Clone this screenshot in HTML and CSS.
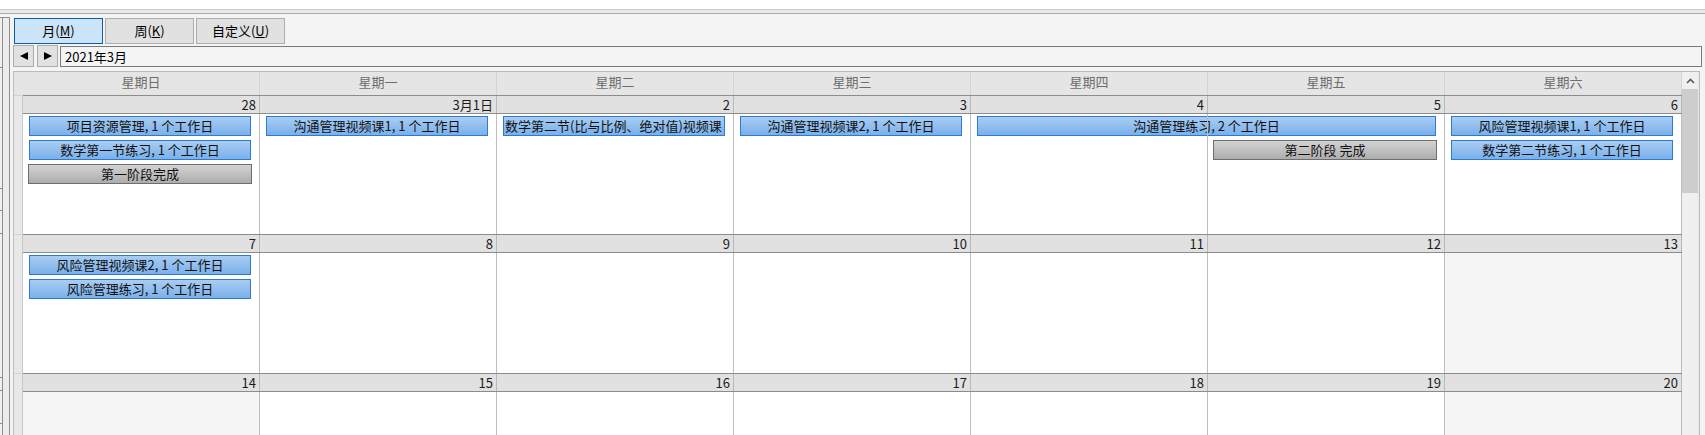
FILE: index.html
```html
<!DOCTYPE html>
<html lang="zh-CN">
<head>
<meta charset="utf-8">
<title>日历</title>
<link rel="stylesheet" href="styles.css">
</head>
<body>
<div class="topbar"></div>
<div class="rule"></div>
<div class="frame">
  <aside class="side">
    <div class="side-tabs">
      <div class="seg s1"></div>
      <div class="seg s2"></div>
      <div class="seg s3"></div>
      <div class="seg s4"></div>
      <div class="seg s5"></div>
      <div class="seg s6"></div>
      <div class="seg s7"></div>
      <div class="seg s8"></div>
    </div>
    <div class="side-panel"></div>
  </aside>
  <main class="main">
    <div class="toolbar">
      <button class="btn active">月(<u>M</u>)</button>
      <button class="btn">周(<u>K</u>)</button>
      <button class="btn">自定义(<u>U</u>)</button>
    </div>
    <div class="nav">
      <button class="nbtn"><svg width="10" height="10" viewBox="0 0 10 10"><polygon points="9,1 9,9 1,5" fill="#000"/></svg></button>
      <button class="nbtn next"><svg width="10" height="10" viewBox="0 0 10 10"><polygon points="1,1 1,9 9,5" fill="#000"/></svg></button>
      <div class="datebox">2021年3月</div>
    </div>
    <div class="calendar">
      <div class="cal-body">
        <div class="dow-row">
          <div class="dow-strip"></div>
          <div class="dow">星期日</div>
          <div class="dow">星期一</div>
          <div class="dow">星期二</div>
          <div class="dow">星期三</div>
          <div class="dow">星期四</div>
          <div class="dow">星期五</div>
          <div class="dow">星期六</div>
        </div>

        <div class="week">
          <div class="strip"></div>
          <div class="week-main">
            <div class="date-row">
              <div class="date">28</div>
              <div class="date">3月1日</div>
              <div class="date">2</div>
              <div class="date">3</div>
              <div class="date">4</div>
              <div class="date">5</div>
              <div class="date">6</div>
            </div>
            <div class="week-body">
              <div class="day c1"></div>
              <div class="day c2"></div>
              <div class="day c3"></div>
              <div class="day c4"></div>
              <div class="day c5"></div>
              <div class="day c6"></div>
              <div class="day c7"></div>
              <div class="ev c1 r1">项目资源管理, 1 个工作日</div>
              <div class="ev c1 r2">数学第一节练习, 1 个工作日</div>
              <div class="ev ms c1 r3">第一阶段完成</div>
              <div class="ev c2 r1">沟通管理视频课1, 1 个工作日</div>
              <div class="ev left c3 r1">数学第二节(比与比例、绝对值)视频课</div>
              <div class="ev c4 r1">沟通管理视频课2, 1 个工作日</div>
              <div class="ev c5s r1">沟通管理练习, 2 个工作日</div>
              <div class="ev ms c6 r2">第二阶段 完成</div>
              <div class="ev c7 r1">风险管理视频课1, 1 个工作日</div>
              <div class="ev c7 r2">数学第二节练习, 1 个工作日</div>
            </div>
          </div>
        </div>

        <div class="week">
          <div class="strip"></div>
          <div class="week-main">
            <div class="date-row">
              <div class="date">7</div>
              <div class="date">8</div>
              <div class="date">9</div>
              <div class="date">10</div>
              <div class="date">11</div>
              <div class="date">12</div>
              <div class="date">13</div>
            </div>
            <div class="week-body">
              <div class="day c1"></div>
              <div class="day c2"></div>
              <div class="day c3"></div>
              <div class="day c4"></div>
              <div class="day c5"></div>
              <div class="day c6"></div>
              <div class="day off c7"></div>
              <div class="ev c1 r1">风险管理视频课2, 1 个工作日</div>
              <div class="ev c1 r2">风险管理练习, 1 个工作日</div>
            </div>
          </div>
        </div>

        <div class="week">
          <div class="strip"></div>
          <div class="week-main">
            <div class="date-row">
              <div class="date">14</div>
              <div class="date">15</div>
              <div class="date">16</div>
              <div class="date">17</div>
              <div class="date">18</div>
              <div class="date">19</div>
              <div class="date">20</div>
            </div>
            <div class="week-body">
              <div class="day off c1"></div>
              <div class="day c2"></div>
              <div class="day c3"></div>
              <div class="day c4"></div>
              <div class="day c5"></div>
              <div class="day c6"></div>
              <div class="day off c7"></div>
            </div>
          </div>
        </div>
      </div>
      <div class="vscroll">
        <div class="vs-up"><svg width="9" height="6" viewBox="0 0 9 6"><polyline points="1,5 4.5,1.5 8,5" fill="none" stroke="#5a5a5a" stroke-width="1.6"/></svg></div>
        <div class="vs-thumb"></div>
      </div>
    </div>
  </main>
</div>
</body>
</html>
```

FILE: styles.css
```css
* { box-sizing: border-box; }

html, body {
  margin: 0;
  height: 435px;
  overflow: hidden;
}

body {
  background: #f4f4f4;
  font-family: "Noto Sans CJK SC", "Noto Sans", sans-serif;
  font-size: 13px;
  color: #000;
}

.topbar {
  height: 9px;
  background: #fff;
}

.rule {
  height: 5px;
  border-top: 1px solid #c9c9c9;
  border-bottom: 1px solid #a9a9a9;
  background: #e9e9e9;
}

.frame {
  display: flex;
  height: 421px;
}

/* left side frame */
.side {
  width: 13px;
  flex: none;
  display: flex;
  padding-top: 3px;
}

.side-tabs {
  width: 3px;
  display: flex;
  flex-direction: column;
  border-right: 1px solid #8e8e8e;
  border-top: 1px solid #8e8e8e;
}

.seg {
  flex: none;
  border-bottom: 1px solid #8e8e8e;
  background: #f0f0f0;
}
.s1 { height: 50px; }
.s2 { height: 121px; }
.s3 { height: 22px; }
.s4 { height: 23px; }
.s5 { height: 144px; }
.s6 { height: 13px; }
.s7 { height: 33px; }
.s8 { flex: 1; border-bottom: none; }

.side-panel {
  width: 7px;
  border-right: 1px solid #8e8e8e;
  border-top: 1px solid #8e8e8e;
  background: #ececec;
}

/* main */
.main {
  flex: 1;
  display: flex;
  flex-direction: column;
  min-width: 0;
}

.toolbar {
  display: flex;
  gap: 2px;
  padding: 4px 0 0 1px;
}

.btn {
  width: 89px;
  height: 26px;
  padding: 0;
  border: 1px solid #adadad;
  background: #e1e1e1;
  font-family: inherit;
  font-size: 13px;
  line-height: 22px;
  color: #000;
}

.btn.active {
  background: #cce4f7;
  border-color: #0b5ea6;
}

.nav {
  display: flex;
  margin-top: 1px;
  height: 22px;
}

.nbtn {
  width: 21px;
  height: 22px;
  padding: 0;
  border: 1px solid #adadad;
  background: #e1e1e1;
  display: flex;
  align-items: center;
  justify-content: center;
}

.nbtn.next { margin-left: 3px; }

.datebox {
  margin-left: 2px;
  margin-top: 1px;
  width: 1642px;
  height: 21px;
  border: 1px solid #7a7a7a;
  padding-left: 4px;
  line-height: 19px;
  font-size: 13px;
}

/* calendar */
.calendar {
  margin-top: 4px;
  width: 1687px;
  flex: 1;
  display: flex;
  border: 1px solid #bcbcbc;
  border-bottom: none;
  background: #fff;
  overflow: hidden;
}

.cal-body {
  width: 1668px;
  flex: none;
  display: flex;
  flex-direction: column;
}

.dow-row {
  display: flex;
  height: 23px;
  flex: none;
  background: #e5e5e5;
}

.dow-strip { width: 9px; flex: none; }

.dow {
  width: 237px;
  flex: none;
  border-right: 1px solid #d3d3d3;
  text-align: center;
  color: #6d6d6d;
  line-height: 19px;
}

.week {
  display: flex;
  flex: none;
}

.strip {
  width: 9px;
  flex: none;
  background: #e8e8e8;
  border-right: 1px solid #c8c8c8;
  border-top: 1px solid #d4d4d4;
}

.week-main {
  width: 1659px;
  display: flex;
  flex-direction: column;
}

.date-row {
  display: flex;
  height: 19px;
  border-top: 1px solid #8c8c8c;
  border-bottom: 1px solid #8c8c8c;
  background: #e1e1e1;
}

.date {
  width: 237px;
  flex: none;
  border-right: 1px solid #b9b9b9;
  text-align: right;
  padding-right: 3px;
  line-height: 17px;
  color: #1b1b1b;
}

.week-body {
  position: relative;
  height: 120px;
  display: grid;
  grid-template-columns: repeat(7, 237px);
  grid-template-rows: 2px 24px 24px 24px 1fr;
}

.week-body::after {
  content: "";
  position: absolute;
  inset: 0;
  background: repeating-linear-gradient(to right, transparent 0 236px, #bdbdbd 236px 237px);
  pointer-events: none;
}

.day {
  grid-row: 1 / -1;
  background: #fff;
}
.day.off { background: #f5f5f5; }

.c1 { grid-column: 1; }
.c2 { grid-column: 2; }
.c3 { grid-column: 3; }
.c4 { grid-column: 4; }
.c5 { grid-column: 5; }
.c6 { grid-column: 6; }
.c7 { grid-column: 7; }
.c5s { grid-column: 5 / span 2; }

.r1 { grid-row: 2; }
.r2 { grid-row: 3; }
.r3 { grid-row: 4; }

.ev {
  height: 20px;
  margin: 0 9px 0 6px;
  border: 1px solid #2b7bd3;
  background: linear-gradient(#a9cdf3, #7ab0ea);
  text-align: center;
  white-space: nowrap;
  overflow: hidden;
  line-height: 18px;
  font-size: 13px;
  color: #111;
}

.ev.ms {
  margin: 0 8px 0 5px;
  border-color: #6e6e6e;
  background: linear-gradient(#d3d3d3, #adadad);
}

.ev.left {
  text-align: left;
  padding-left: 1px;
}

/* scrollbar */
.vscroll {
  width: 17px;
  flex: none;
  background: #f0f0f0;
  border-right: 1px solid #e6e6e6;
  display: flex;
  flex-direction: column;
}

.vs-up {
  height: 17px;
  display: flex;
  align-items: center;
  justify-content: center;
}

.vs-thumb {
  height: 104px;
  background: #cdcdcd;
}
```
